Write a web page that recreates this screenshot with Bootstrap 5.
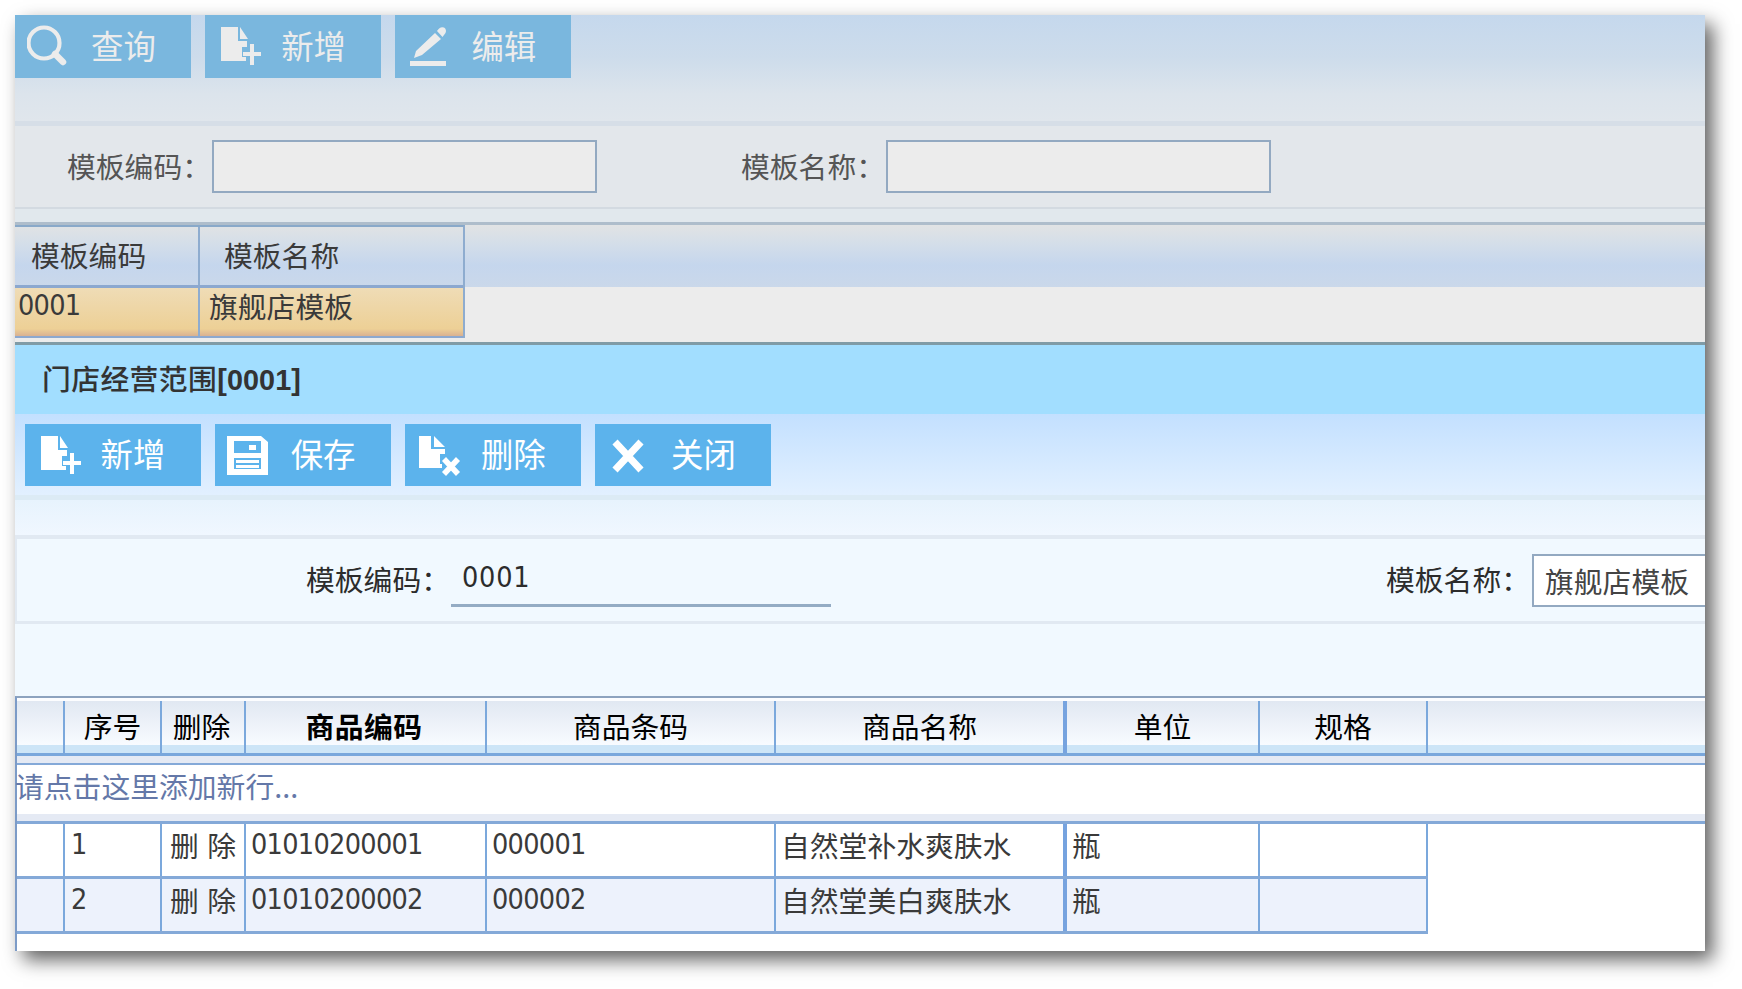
<!DOCTYPE html>
<html lang="zh-CN">
<head>
<meta charset="utf-8">
<title>门店经营范围</title>
<link href="https://cdn.jsdelivr.net/npm/bootstrap@5.3.0/dist/css/bootstrap.min.css" rel="stylesheet">
<style>
  body{background:#fff;font-family:"DejaVu Sans Condensed","DejaVu Sans","Noto Sans CJK SC",sans-serif;font-size:28.8px;line-height:36px;color:#3c3c3c;height:989px;padding:15px 0 0 15px}
  .zh{font-family:"Noto Sans CJK SC",sans-serif;font-weight:400;white-space:nowrap}
  .num{letter-spacing:-.7px;font-size:28.5px}
  .app-panel{width:1690px;height:936px;background:#fff;box-shadow:8px 9px 18px 0 rgba(0,0,0,.62)}
  .app-inner{width:1690px;height:936px;overflow:hidden}
  .tool{width:176px;height:62.5px;border:0;border-radius:0;padding:0 0 0 12px;font-size:32.4px;line-height:62px;gap:20px;background:#5cb3ec;color:#fff;display:flex;align-items:center;margin-right:14.2px;flex:none}
  .tool svg{width:44px;height:50px;flex:none}
  .tool .zh{margin-top:-3px}
  .upper{color:#555}
  .upper .tool{background:#7ab7de;color:#ececec}
  .upper-tools{height:106px;background:linear-gradient(#c5d8ed,#cddceb 40%,#dce4ec 75%,#e0e6ec)}
  .upper-form{height:88px;border-top:5px solid #d6dee7;border-bottom:2px solid #d3dae1;background:#e3e7eb;padding-top:14px}
  .upper-form>.zh{flex:none;padding-top:8px}
  .field-box{border:2px solid #93a9c1;width:385px;height:53px;background:#ececec;flex:none}
  .upper-gap{height:13px;background:#e1e8ed}
  .upper-grid{height:120px;border-top:3px solid #aebdcb;background:#ececec}
  .band{height:62px;background:linear-gradient(#e1e3e4,#d4dee9 30%,#c5d6ed 65%,#cad8ea)}
  .upper-cells{width:450px;border-right:2px solid #8eaccf;border-top:2px solid #89a9c9}
  .upper-cells .c1{width:185px;flex:none;border-right:2px solid #8eaccf}
  .u-head{height:61px;border-bottom:3px solid #8ca8cf;color:#3a3a3a;line-height:56px}
  .u-row{height:50px;border-bottom:2px solid #8ca8cf;background:linear-gradient(#efdcb6,#edd096 85%,#d9b191);color:#3a3a3a}
  .win-title{height:72px;border-top:3px solid #809ba6;background:#a2deff;line-height:66px;padding-left:27px;color:#333}
  .win-title .zh{font-weight:500;letter-spacing:.4px}
  .win-title b{font-family:"Liberation Sans",sans-serif;letter-spacing:.1px}
  .win-tools{height:81px;background:linear-gradient(#c3e0ff,#e2f0ff);padding:9.5px 0 0 9.5px}
  .win-gap{height:40px;border-top:5px solid #dcebf5;background:linear-gradient(#e7f3fd,#f0f7ff)}
  .win-form{height:89px;border-top:4px solid #e1e9f2;border-bottom:3px solid #e1e9f2;border-left:2px solid #e1e9f2;background:#f1f9ff;color:#2c2c2c}
  .win-form>.zh{flex:none;padding-top:22px}
  .line-field{width:380px;height:55px;border-bottom:3px solid #94acc4;flex:none;padding:8px 0 0 11px;margin-top:13px}
  .line-field.num{letter-spacing:.8px}
  .win-form>.field-box{margin-top:15px;padding:7px 0 0 11px;background:#fff;color:#444}
  .win-space{height:72px;background:#f1f9ff}
  .grid-box{border-left:2px solid #7c9bc7;border-top:2px solid #8da3bf;background:#fff;height:256px}
  .g-head{height:58px;border-top:3px solid #fcfdff;border-bottom:3px solid #79a7dc;background:linear-gradient(#e1e8f2,#f8fbff 84%,#cde5f7 85%,#cde5f7)}
  .g-head>div{text-align:center;color:#000;line-height:50px;border-right:2px solid #7ba8dc;flex:none}
  .strip{height:7px;background:#e5eaf4}
  .g-row{height:55px;width:1411px;border-bottom:3px solid #84a9d8;color:#3a3a3a;line-height:42px}
  .g-row>div{border-right:2px solid #7ba8dc;padding-left:5px;white-space:nowrap;flex:none}
  .g-row>.w1{padding-left:6px}
  .g-row>.del{padding-left:8px;word-spacing:2px}
  .g-row.alt{background:#edf2fc}
  .w0{width:48px}.w1{width:97px}.w2{width:84px}.w3{width:241px}.w4{width:289px}.w5{width:291px}.w6{width:193px}.w7{width:168px}
  .g-head>.w2,.g-head>.w3{padding-right:3px}
  .g-head>.w3{font-weight:700;letter-spacing:.4px}
  .g-head>.w5,.g-row>.w5{border-right:4px solid #76a3df}
  .add-row{height:51px;border-top:2px solid #84a9d8;color:#6478a8;line-height:42px;text-indent:-2px}
  .g-top{height:3px;background:#84a9d8}
</style>
<script src="https://cdn.jsdelivr.net/npm/bootstrap@5.3.0/dist/js/bootstrap.bundle.min.js"></script>
</head>
<body>
<svg width="0" height="0" class="position-absolute"><defs>
  <symbol id="i-add" viewBox="0 0 44 50"><path fill="currentColor" d="M4 6h17v14h9v6h-5v10h4v4H4zM23 6l8 12h-8zM33 23h4v8h8v4h-8v9h-4v-9h-7v-4h7z"/></symbol>
  <symbol id="i-del" viewBox="0 0 44 50"><path fill="currentColor" d="M2 6h12v13h14v5h-5v10h2v4H2zM17 6l11 11H17z"/><path fill="none" stroke="currentColor" stroke-width="5.5" d="M27 29l14 15M41 29L27 44"/></symbol>
</defs></svg>
<main class="app-panel"><div class="app-inner">
  <section class="upper">
    <div class="upper-tools d-flex align-items-start">
      <button class="tool"><svg viewBox="0 0 44 50"><circle cx="17" cy="22" r="15.5" fill="none" stroke="currentColor" stroke-width="4.2"/><path d="M28 33l8 8" stroke="currentColor" stroke-width="6.5" stroke-linecap="round"/></svg><span class="zh">查询</span></button>
      <button class="tool"><svg><use href="#i-add"/></svg><span class="zh">新增</span></button>
      <button class="tool"><svg viewBox="0 0 44 50"><path fill="currentColor" d="M3 40h36v5H3zM7 37l2-7L28 12l6 6-19 16zM30 10q3-5 7-3.500q3 2 1.500 5.500l-3 4z"/></svg><span class="zh">编辑</span></button>
    </div>
    <div class="upper-form d-flex align-items-start">
      <span class="zh" style="width:197px;padding-left:52px">模板编码：</span><div class="field-box"></div>
      <span class="zh" style="width:289px;padding-left:144px">模板名称：</span><div class="field-box"></div>
    </div>
    <div class="upper-gap"></div>
    <div class="upper-grid">
      <div class="band">
        <div class="upper-cells">
          <div class="u-head d-flex"><div class="c1 zh" style="padding-left:16px">模板编码</div><div class="zh" style="padding-left:24px">模板名称</div></div>
          <div class="u-row d-flex"><div class="c1 num" style="padding-left:3px">0001</div><div class="zh" style="padding-left:9px">旗舰店模板</div></div>
        </div>
      </div>
    </div>
  </section>
  <section>
    <div class="win-title"><span class="zh">门店经营范围</span><b>[0001]</b></div>
    <div class="win-tools d-flex align-items-start">
      <button class="tool"><svg><use href="#i-add"/></svg><span class="zh">新增</span></button>
      <button class="tool"><svg viewBox="0 0 44 50"><path fill="currentColor" fill-rule="evenodd" d="M0 6h34l7 6v33H0zM7 11v12h27V11zM22 15h7v5h-7zM7 28v11h27V28zM9 30h23v3H9zM9 35h23v3H9z"/></svg><span class="zh">保存</span></button>
      <button class="tool"><svg><use href="#i-del"/></svg><span class="zh">删除</span></button>
      <button class="tool"><svg viewBox="0 0 44 50"><path fill="none" stroke="currentColor" stroke-width="7" d="M8 12l26 28M34 12L8 40"/></svg><span class="zh">关闭</span></button>
    </div>
    <div class="win-gap"></div>
    <div class="win-form d-flex align-items-start">
      <span class="zh" style="width:434px;padding-left:289px">模板编码：</span>
      <div class="line-field num">0001</div>
      <span class="zh" style="width:701px;padding-left:555px">模板名称：</span>
      <div class="field-box zh">旗舰店模板</div>
    </div>
    <div class="win-space"></div>
    <div class="grid-box">
      <div class="g-head d-flex zh"><div class="w0"></div><div class="w1">序号</div><div class="w2">删除</div><div class="w3">商品编码</div><div class="w4">商品条码</div><div class="w5">商品名称</div><div class="w6">单位</div><div class="w7">规格</div></div>
      <div class="strip"></div>
      <div class="add-row zh">请点击这里添加新行...</div>
      <div class="strip"></div>
      <div class="g-top"></div>
      <div class="g-row d-flex"><div class="w0"></div><div class="w1 num">1</div><div class="w2 zh del">删 除</div><div class="w3 num">01010200001</div><div class="w4 num">000001</div><div class="w5 zh">自然堂补水爽肤水</div><div class="w6 zh">瓶</div><div class="w7"></div></div>
      <div class="g-row alt d-flex"><div class="w0"></div><div class="w1 num">2</div><div class="w2 zh del">删 除</div><div class="w3 num">01010200002</div><div class="w4 num">000002</div><div class="w5 zh">自然堂美白爽肤水</div><div class="w6 zh">瓶</div><div class="w7"></div></div>
    </div>
  </section>
</div></main>
</body>
</html>
